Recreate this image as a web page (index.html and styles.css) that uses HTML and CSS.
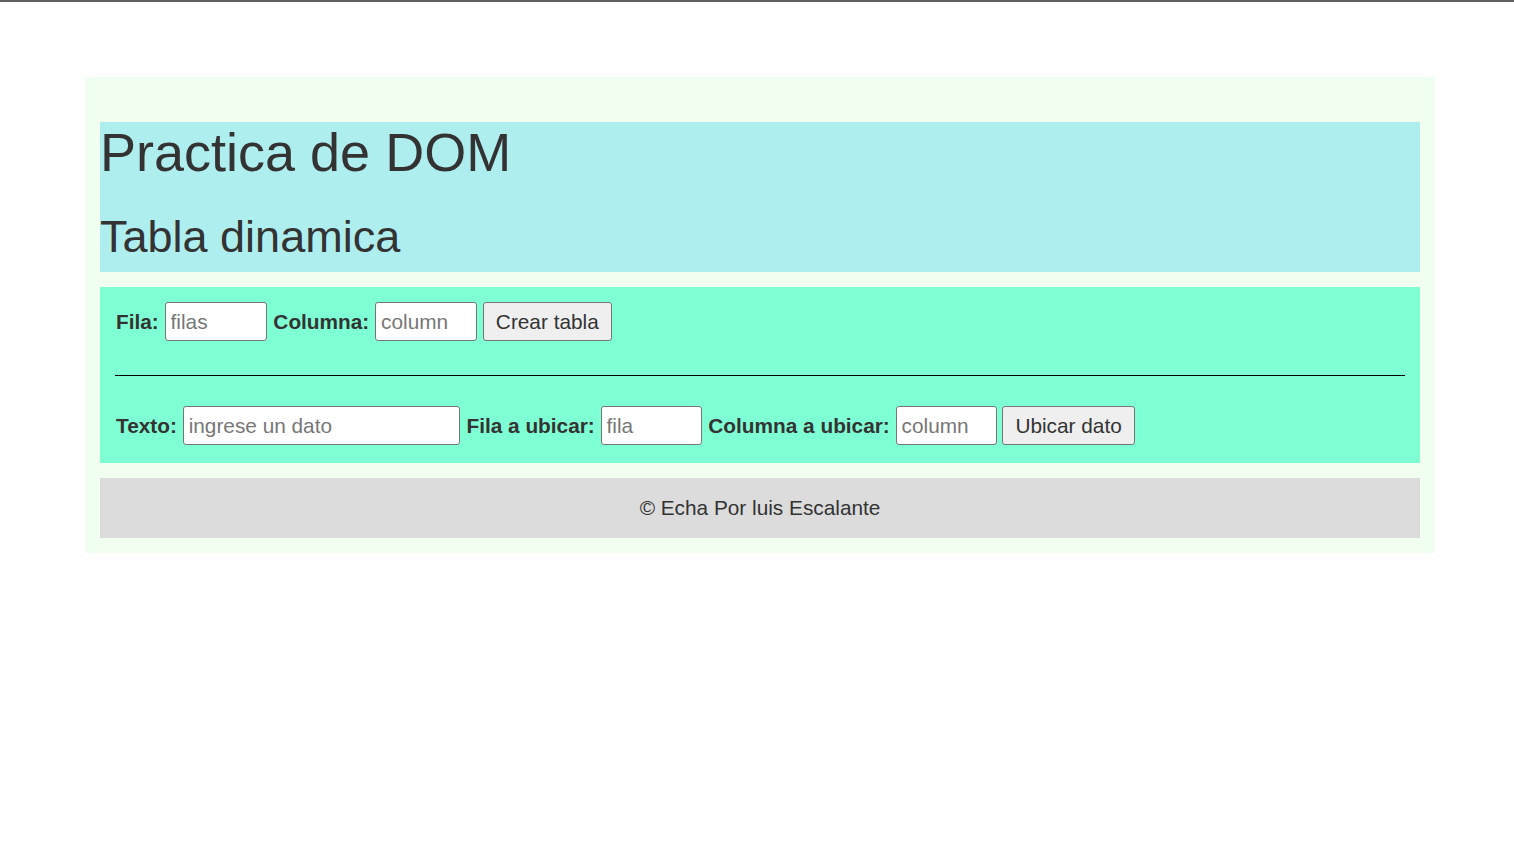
FILE: index.html
```html
<!DOCTYPE html>
<html lang="es">
<head>
<meta charset="utf-8">
<title>Practica de DOM</title>
<link rel="stylesheet" href="styles.css">
</head>
<body>
<div class="page">
  <header class="header">
    <h1 class="title">Practica de DOM</h1>
    <h2 class="subtitle">Tabla dinamica</h2>
  </header>
  <section class="panel">
    <div class="row">
      <label class="lbl" for="filas">Fila:</label>
      <input class="field mid" id="filas" type="text" placeholder="filas">
      <label class="lbl" for="cols">Columna:</label>
      <input class="field mid" id="cols" type="text" placeholder="column">
      <button class="btn" type="button">Crear tabla</button>
    </div>
    <hr class="divider">
    <div class="row">
      <label class="lbl" for="texto">Texto:</label>
      <input class="field wide" id="texto" type="text" placeholder="ingrese un dato">
      <label class="lbl" for="fila">Fila a ubicar:</label>
      <input class="field small" id="fila" type="text" placeholder="fila">
      <label class="lbl" for="col">Columna a ubicar:</label>
      <input class="field small" id="col" type="text" placeholder="column">
      <button class="btn" type="button">Ubicar dato</button>
    </div>
  </section>
  <footer class="footer">© Echa Por luis Escalante</footer>
</div>
</body>
</html>
```
FILE: styles.css
```css
html {
  border-top: 2px solid #5f5f5f;
}
body {
  margin: 0;
  font-family: "Liberation Sans", Arial, sans-serif;
  color: #333;
}
.page {
  margin: 75px 0 0 85px;
  width: 1350px;
  box-sizing: border-box;
  background: #f0fff0;
  padding: 45px 15px 15px;
}
.header {
  background: #afeeee;
  padding: 0 0 10px;
}
.title {
  margin: 0;
  font-size: 54px;
  font-weight: normal;
  line-height: 61px;
}
.subtitle {
  margin: 29px 0 0;
  font-size: 45px;
  font-weight: normal;
  line-height: 50px;
}
.panel {
  margin-top: 15px;
  background: #7fffd4;
  padding: 15px 15px 18px;
}
.row {
  display: flex;
  align-items: center;
  gap: 5.8px;
  height: 39px;
}
.lbl {
  font-weight: bold;
  font-size: 20.8px;
  padding-left: 1px;
}
.field {
  box-sizing: border-box;
  height: 39px;
  border: 1px solid #767676;
  border-radius: 3px;
  padding: 0 5px;
  font-family: "Liberation Sans", Arial, sans-serif;
  font-size: 20.8px;
  color: #333;
  background: #fff;
}
.field::placeholder {
  color: #777;
}
.mid { width: 102px; }
.small { width: 101px; }
.wide { width: 277px; }
.btn {
  box-sizing: border-box;
  height: 39px;
  border: 1px solid #767676;
  border-radius: 3px;
  background: #efefef;
  padding: 0 12px;
  font-family: "Liberation Sans", Arial, sans-serif;
  font-size: 20.8px;
  color: #333;
}
.divider {
  margin: 34px 0 30px;
  border: 0;
  border-top: 1px solid #000;
  height: 0;
}
.footer {
  margin-top: 15px;
  background: #dcdcdc;
  height: 60px;
  display: flex;
  align-items: center;
  justify-content: center;
  font-size: 20.8px;
}
```
